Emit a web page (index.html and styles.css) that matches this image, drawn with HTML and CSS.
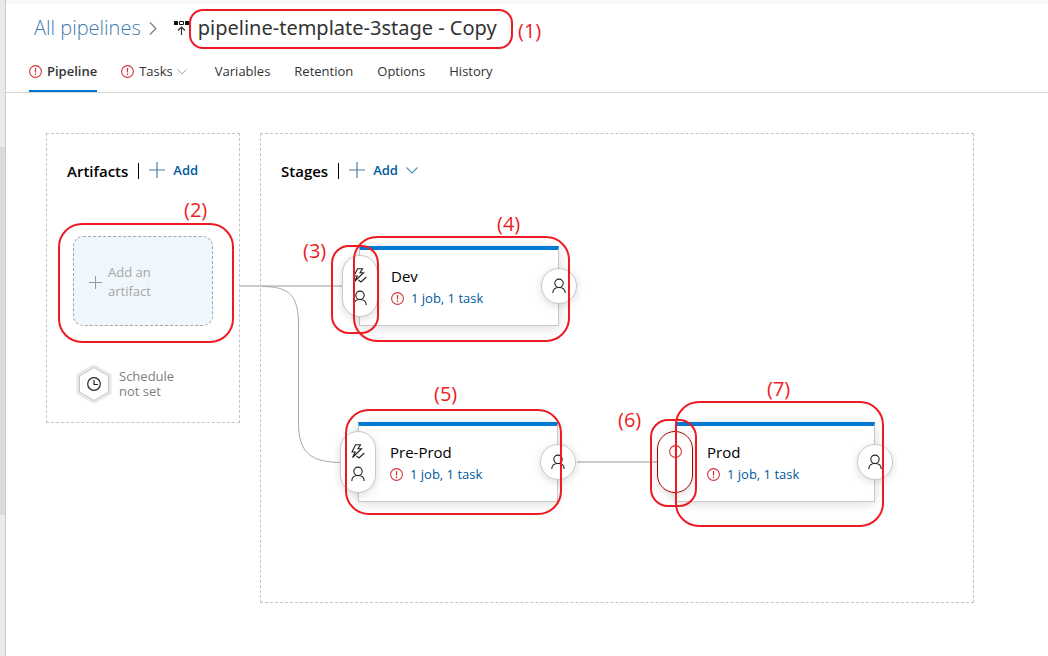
FILE: index.html
```
<!DOCTYPE html>
<html lang="en">
<head>
<meta charset="utf-8">
<title>pipeline-template-3stage - Copy</title>
<link rel="stylesheet" href="styles.css">
</head>
<body>
<svg class="defs" aria-hidden="true">
  <symbol id="warn" viewBox="0 0 13 13"><circle cx="6.5" cy="6.5" r="5.9" fill="none" stroke="currentColor" stroke-width="1.1"/><path d="M6.5 3v4.6M6.5 8.6v1.3" stroke="currentColor" stroke-width="1.2"/></symbol>
  <symbol id="plus" viewBox="0 0 16 16"><path d="M8 0v16M0 8h16" stroke="currentColor" stroke-width="1.2"/></symbol>
  <symbol id="chevron" viewBox="0 0 12 8"><path d="M.5 1.5 6 7l5.500-5.500" fill="none" stroke="currentColor" stroke-width="1.1"/></symbol>
  <symbol id="person" viewBox="0 0 14 16"><circle cx="7" cy="5.300" r="4.200" fill="none" stroke="currentColor" stroke-width="1.1"/><path d="M.8 15C.8 11.500 3.500 9.500 7 9.500s6.200 2 6.200 5.500" fill="none" stroke="currentColor" stroke-width="1.1"/></symbol>
  <symbol id="trigger" viewBox="0 0 14 15"><path d="M4.500.7h5L7 4.700h3.500L1.500 13.500l2.800-5.500H1zM5.500 12l2.500 2 5.300-5" fill="none" stroke="currentColor" stroke-width="1.1"/></symbol>
</svg>
<div class="page">
  <div class="rail"><div class="thumb"></div></div>
  <main class="main">
    <header class="header">
      <nav class="crumbs">
        <a class="crumb" href="#">All pipelines</a>
        <svg class="sep" viewBox="0 0 8 13"><path d="M1 .5 7 6.500l-6 6" fill="none" stroke="#777" stroke-width="1.1"/></svg>
        <svg class="release" viewBox="0 0 15 16"><path d="M0 1h4v4H0zM11 1h4v4h-4z" fill="#111"/><path d="M5.500 1.500h4v3h-4z" fill="none" stroke="#111"/><path d="M7.500 15V7M4 10.500 7.500 7l3.500 3.500" fill="none" stroke="#333" stroke-width="1.200"/></svg>
        <h1 class="title">pipeline-template-3stage - Copy</h1>
      </nav>
      <nav class="tabs">
        <a class="tab active" href="#"><svg class="warn"><use href="#warn"/></svg>Pipeline</a>
        <a class="tab tasks" href="#"><svg class="warn"><use href="#warn"/></svg>Tasks<svg class="chevron pale"><use href="#chevron"/></svg></a>
        <a class="tab" href="#">Variables</a>
        <a class="tab" href="#">Retention</a>
        <a class="tab" href="#">Options</a>
        <a class="tab" href="#">History</a>
      </nav>
    </header>
    <div class="canvas">
      <section class="panel artifacts">
        <div class="panel-head">
          <h2>Artifacts</h2>
          <button class="add"><svg class="plus"><use href="#plus"/></svg>Add</button>
        </div>
        <button class="add-artifact"><svg class="plus small" viewBox="0 0 16 16"><use href="#plus"/></svg><span>Add an<br>artifact</span></button>
        <button class="schedule">
          <svg class="hex" viewBox="0 0 36 40"><path d="M18 2 34 11v18l-16 9L2 29V11z" fill="#fff" stroke="#e8e8e8" stroke-width="3"/><path d="M18 3.500 32.500 12v16L18 36.500 3.500 28V12z" fill="#fff" stroke="#c4c4c4"/><circle cx="18" cy="20" r="6.300" fill="none" stroke="#222" stroke-width="1.200"/><path d="M18 16v4.500h4" fill="none" stroke="#222" stroke-width="1.200"/></svg>
          <span>Schedule<br>not set</span>
        </button>
      </section>
      <section class="panel stages">
        <div class="panel-head">
          <h2>Stages</h2>
          <button class="add"><svg class="plus"><use href="#plus"/></svg>Add<svg class="chevron"><use href="#chevron"/></svg></button>
        </div>
      </section>
      <svg class="links" viewBox="0 0 700 420" width="700" height="420" aria-hidden="true">
        <path d="M234 193h102M571 369h80" fill="none" stroke="#ccc" stroke-width="2"/>
        <path d="M256 193.500C284 193.500 292.500 203 292.500 232v98C292.500 359 304 369.500 336 369.500" fill="none" stroke="#aaa"/>
      </svg>
      <article class="stage dev">
        <button class="pre" aria-label="Pre-deployment conditions"><svg class="trigger"><use href="#trigger"/></svg><svg class="person"><use href="#person"/></svg></button>
        <h3>Dev</h3>
        <a class="jobs" href="#"><svg class="warn"><use href="#warn"/></svg>1 job, 1 task</a>
        <button class="post" aria-label="Post-deployment conditions"><svg class="person"><use href="#person"/></svg></button>
      </article>
      <article class="stage preprod">
        <button class="pre" aria-label="Pre-deployment conditions"><svg class="trigger"><use href="#trigger"/></svg><svg class="person"><use href="#person"/></svg></button>
        <h3>Pre-Prod</h3>
        <a class="jobs" href="#"><svg class="warn"><use href="#warn"/></svg>1 job, 1 task</a>
        <button class="post" aria-label="Post-deployment conditions"><svg class="person"><use href="#person"/></svg></button>
      </article>
      <article class="stage prod">
        <button class="pre invalid" aria-label="Pre-deployment conditions"><svg class="warn"><use href="#warn"/></svg></button>
        <h3>Prod</h3>
        <a class="jobs" href="#"><svg class="warn"><use href="#warn"/></svg>1 job, 1 task</a>
        <button class="post" aria-label="Post-deployment conditions"><svg class="person"><use href="#person"/></svg></button>
      </article>
    </div>
  </main>
  <div class="mark m1"><span>(1)</span></div>
  <div class="mark m2"><span>(2)</span></div>
  <div class="mark m3"><span>(3)</span></div>
  <div class="mark m4"><span>(4)</span></div>
  <div class="mark m5"><span>(5)</span></div>
  <div class="mark m6"><span>(6)</span></div>
  <div class="mark m7"><span>(7)</span></div>
</div>
</body>
</html>
```
FILE: styles.css
```
* { box-sizing: border-box; }
body { margin: 0; background: #fff; color: #333; font: 13px/18px "Open Sans", "Noto Sans", sans-serif; }
h1, h2, h3 { margin: 0; font-weight: 400; }
a { color: inherit; text-decoration: none; }
button { margin: 0; padding: 0; border: 0; background: none; color: inherit; font: inherit; text-align: left; cursor: pointer; }
svg { flex: none; display: block; }
.defs { position: absolute; width: 0; height: 0; }

.page { position: relative; display: flex; min-height: 100vh; }
.rail { flex: none; width: 6px; padding-top: 147px; background: #eaeaea; border-right: 1px solid #ccc; }
.thumb { height: 368px; background: #dbdbdb; }
.main { flex: 1; min-width: 0; border-top: 4px solid #f8f8f8; }

.header { border-bottom: 1px solid #d6d6d6; }
.crumbs { display: flex; align-items: center; height: 48px; padding-left: 28px; font-size: 20px; line-height: 28px; white-space: nowrap; }
.crumb { color: #3f7cab; font-weight: 300; }
.sep { width: 8px; height: 13px; margin: 0 17px 0 8px; }
.release { width: 15px; height: 16px; margin-right: 9px; }
.title { font-family: "Noto Sans", "Open Sans", sans-serif; font-size: 20px; line-height: 28px; color: #333; }
.tabs { display: flex; gap: 24px; height: 40px; padding-left: 23px; }
.tab { display: flex; align-items: center; border-bottom: 2px solid transparent; }
.tab.active { border-color: #0078d4; font-weight: 600; }
.tab.tasks { margin-right: 4px; }
.warn { width: 13px; height: 13px; color: #d13438; }
.tab .warn { margin-right: 5px; }
.chevron { width: 12px; height: 8px; margin-left: 8px; color: #4a8fb5; }
.chevron.pale { width: 10px; height: 7px; margin-left: 4px; color: #7fa3bb; }

.canvas { position: relative; display: flex; align-items: flex-start; gap: 20px; padding: 40px 74px 40px 40px; }
.panel { border: 1px dashed #c4c4c4; }
.artifacts { flex: none; width: 194px; height: 290px; padding: 26px 20px; }
.stages { flex: 1; height: 470px; padding: 26px 20px; }
.panel-head { display: flex; align-items: center; height: 22px; }
.panel-head h2 { padding-right: 10px; color: #000; font-size: 15px; font-weight: 600; line-height: 16px; border-right: 1px solid #000; }
.add { display: flex; align-items: center; margin-left: 10px; padding-bottom: 2px; color: #005a9e; font-weight: 600; }
.plus { width: 16px; height: 16px; margin-right: 8px; color: #4c7fa8; }
.plus.small { width: 13px; height: 13px; margin-right: 6px; color: #999; }
.add-artifact { display: flex; align-items: center; width: 140px; height: 90px; margin: 54px 0 0 6px; padding: 2px 0 0 15px; background: #eff6fc; border: 1px dashed #a6a6a6; border-radius: 10px; color: #a6a6a6; line-height: 19px; }
.schedule { display: flex; align-items: center; gap: 7px; margin: 38px 0 0 9px; color: #808080; line-height: 15px; }
.hex { width: 36px; height: 40px; }

.links { position: absolute; left: 0; top: 0; }
.stage { position: absolute; width: 200px; height: 80px; padding: 16px 0 0 31px; background: #fff; border: 1px solid #c8c8c8; border-top: 4px solid #0078d4; box-shadow: 0 2px 10px rgba(0, 0, 0, .14); }
.dev { left: 353px; top: 153px; }
.preprod { left: 352px; top: 329px; }
.prod { left: 669px; top: 329px; }
.stage h3 { color: #000; font-size: 15px; line-height: 20px; }
.jobs { display: flex; align-items: center; gap: 7px; margin-top: 3px; color: #005a9e; }
.pre, .post { position: absolute; display: flex; flex-direction: column; align-items: center; background: #fff; border: 1px solid #c8c8c8; border-radius: 18px; box-shadow: 0 2px 8px rgba(0, 0, 0, .14); color: #222; }
.pre { left: -18px; top: 5px; width: 36px; height: 62px; padding-top: 12px; gap: 7px; }
.preprod .pre { left: -19px; }
.pre.invalid { left: -19px; padding-top: 13px; border-color: #a80000; }
.post { right: -19px; top: 18px; width: 36px; height: 36px; justify-content: center; }
.person { width: 14px; height: 16px; }
.trigger { width: 14px; height: 15px; }

.mark { position: absolute; border: 2px solid #ed1c24; border-radius: 24px; color: #ed1c24; font-size: 20px; line-height: 24px; pointer-events: none; }
.mark span { position: absolute; }
.m1 { left: 189px; top: 9px; width: 324px; height: 40px; border-radius: 14px; }
.m1 span { left: 327px; top: 8px; }
.m2 { left: 58px; top: 223px; width: 176px; height: 120px; }
.m2 span { left: 124px; top: -27px; }
.m3 { left: 331px; top: 245px; width: 48px; height: 89px; border-radius: 18px; }
.m3 span { left: -30px; top: -8px; }
.m4 { left: 353px; top: 236px; width: 217px; height: 106px; }
.m4 span { left: 142px; top: -26px; }
.m5 { left: 345px; top: 409px; width: 217px; height: 106px; }
.m5 span { left: 87px; top: -29px; }
.m6 { left: 650px; top: 419px; width: 47px; height: 88px; border-radius: 18px; }
.m6 span { left: -34px; top: -13px; }
.m7 { left: 675px; top: 401px; width: 209px; height: 126px; }
.m7 span { left: 90px; top: -26px; }
```
